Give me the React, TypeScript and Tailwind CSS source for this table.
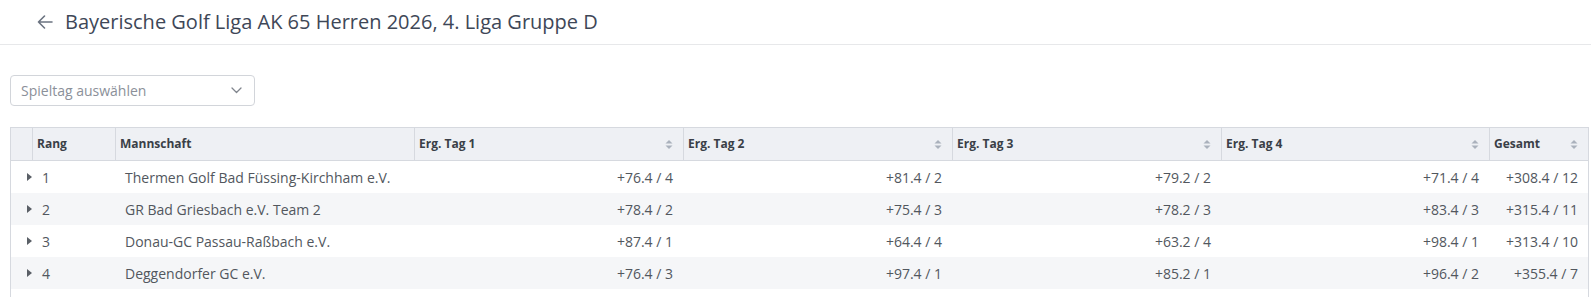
import React from 'react'

const rows = [
  { rank: 1, team: 'Thermen Golf Bad Füssing-Kirchham e.V.', days: ['+76.4 / 4', '+81.4 / 2', '+79.2 / 2', '+71.4 / 4'], total: '+308.4 / 12' },
  { rank: 2, team: 'GR Bad Griesbach e.V. Team 2', days: ['+78.4 / 2', '+75.4 / 3', '+78.2 / 3', '+83.4 / 3'], total: '+315.4 / 11' },
  { rank: 3, team: 'Donau-GC Passau-Raßbach e.V.', days: ['+87.4 / 1', '+64.4 / 4', '+63.2 / 4', '+98.4 / 1'], total: '+313.4 / 10' },
  { rank: 4, team: 'Deggendorfer GC e.V.', days: ['+76.4 / 3', '+97.4 / 1', '+85.2 / 1', '+96.4 / 2'], total: '+355.4 / 7' },
]

const cols = 'grid grid-cols-[21px_83px_299px_269px_269px_269px_268px_1fr]'

function SortIcon() {
  return (
    <svg width="8" height="11" viewBox="0 0 8 11" className="shrink-0">
      <path d="M0.5 4.5 L4 1 L7.5 4.5 Z" fill="#aab1bc" />
      <path d="M0.5 6.5 L4 10 L7.5 6.5 Z" fill="#aab1bc" />
    </svg>
  )
}

function HeadCell({ label, sort = true }: { label: string; sort?: boolean }) {
  return (
    <div className="flex items-center justify-between border-l border-[#d6d9df] pl-[4px] pr-[10px]">
      <span>{label}</span>
      {sort && <SortIcon />}
    </div>
  )
}

export default function App() {
  return (
    <div className="h-[297px] w-[1591px] overflow-hidden bg-white font-['Open_Sans',sans-serif]">
      <header className="flex h-[45px] items-center gap-[12px] border-b border-[#e7e8ea] pl-[37px]">
        <svg width="16" height="14" viewBox="0 0 16 14" fill="none">
          <path d="M15 7 H1.5 M7.5 1 L1.5 7 L7.5 13" stroke="#6b7380" strokeWidth="1.6" strokeLinecap="round" strokeLinejoin="round" />
        </svg>
        <h1 className="text-[20px] text-[#3e4757]">Bayerische Golf Liga AK 65 Herren 2026, 4. Liga Gruppe D</h1>
      </header>

      <div className="pl-[10px] pr-[2px]">
        <div className="mt-[30px] flex h-[31px] w-[245px] items-center justify-between rounded-[4px] border border-[#d2d5da] pl-[10px] pr-[12px] text-[14px] text-[#8b9099]">
          <span>Spieltag auswählen</span>
          <svg width="11" height="7" viewBox="0 0 11 7" fill="none">
            <path d="M1 1 L5.5 5.5 L10 1" stroke="#80858d" strokeWidth="1.3" strokeLinecap="round" strokeLinejoin="round" />
          </svg>
        </div>

        <div className="mt-[21px] border-x border-t border-[#d6d9df]">
          <div className={`${cols} h-[33px] border-b border-[#d6d9df] bg-[#eef0f4] text-[12px] font-bold text-[#3a3f47]`}>
            <div />
            <HeadCell label="Rang" sort={false} />
            <HeadCell label="Mannschaft" sort={false} />
            <HeadCell label="Erg. Tag 1" />
            <HeadCell label="Erg. Tag 2" />
            <HeadCell label="Erg. Tag 3" />
            <HeadCell label="Erg. Tag 4" />
            <HeadCell label="Gesamt" />
          </div>

          {rows.map((r, i) => (
            <div
              key={r.rank}
              className={`${cols} h-[32px] items-center text-[14px] text-[#52575e] ${i % 2 === 1 ? 'bg-[#f5f6f8]' : 'bg-white'}`}
            >
              <div className="flex justify-end">
                <svg width="5" height="8" viewBox="0 0 5 8">
                  <path d="M0 0 L5 4 L0 8 Z" fill="#5a5f66" />
                </svg>
              </div>
              <div className="pl-[10px]">{r.rank}</div>
              <div className="pl-[10px]">{r.team}</div>
              {r.days.map((d, j) => (
                <div key={j} className="pr-[10px] text-right">
                  {d}
                </div>
              ))}
              <div className="pr-[10px] text-right">{r.total}</div>
            </div>
          ))}
          <div className="h-[40px]" />
        </div>
      </div>
    </div>
  )
}
